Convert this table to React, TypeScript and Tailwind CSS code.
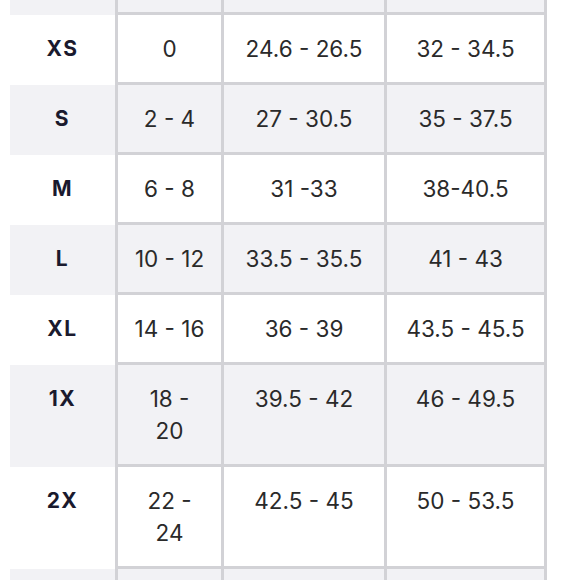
const rows: { size: string; cells: string[][]; gray: boolean }[] = [
  { size: 'XS', cells: [['0'], ['24.6 - 26.5'], ['32 - 34.5']], gray: false },
  { size: 'S', cells: [['2 - 4'], ['27 - 30.5'], ['35 - 37.5']], gray: true },
  { size: 'M', cells: [['6 - 8'], ['31 -33'], ['38-40.5']], gray: false },
  { size: 'L', cells: [['10 - 12'], ['33.5 - 35.5'], ['41 - 43']], gray: true },
  { size: 'XL', cells: [['14 - 16'], ['36 - 39'], ['43.5 - 45.5']], gray: false },
  { size: '1X', cells: [['18 -', '20'], ['39.5 - 42'], ['46 - 49.5']], gray: true },
  { size: '2X', cells: [['22 -', '24'], ['42.5 - 45'], ['50 - 53.5']], gray: false },
];

// widths include the cell borders (border-box)
const colWidths = ['w-[109px]', 'w-[163px]', 'w-[160px]'];

function Row({ size, cells, gray }: { size: string; cells: string[][]; gray: boolean }) {
  const bg = gray ? 'bg-[#f2f2f5]' : 'bg-white';
  return (
    <div className="flex">
      <div
        className={`w-[105px] ${bg} pt-[18px] text-center text-[21px] font-bold leading-[32px] tracking-[1.5px] text-[#1a1a2e]`}
      >
        {size}
      </div>
      {cells.map((lines, i) => (
        <div
          key={i}
          className={`${colWidths[i]} ${bg} ${i === 0 ? 'border-l-[3px]' : ''} border-r-[3px] border-b-[3px] border-[#d2d2d6] pt-[18px] pb-[17px] text-center text-[22.5px] leading-[32px] text-[#2a2a2a]`}
        >
          {lines.map((l, j) => (
            <div key={j}>{l}</div>
          ))}
        </div>
      ))}
    </div>
  );
}

export default function App() {
  return (
    <div
      className="h-[580px] w-[580px] overflow-hidden bg-white pl-[10px]"
      style={{ fontFamily: 'Inter, "Noto Sans", sans-serif' }}
    >
      {/* header row, cropped at the top */}
      <div className="flex">
        <div className="h-[15px] w-[105px] bg-[#f2f2f5]" />
        {colWidths.map((w, i) => (
          <div
            key={i}
            className={`${w} h-[15px] bg-[#f2f2f5] ${i === 0 ? 'border-l-[3px]' : ''} border-r-[3px] border-b-[3px] border-[#d2d2d6]`}
          />
        ))}
      </div>

      {rows.map((r) => (
        <Row key={r.size} {...r} />
      ))}

      {/* next row, cut off at the bottom */}
      <div className="flex">
        <div className="h-[40px] w-[105px] bg-[#f2f2f5]" />
        {colWidths.map((w, i) => (
          <div
            key={i}
            className={`${w} h-[40px] bg-[#f2f2f5] ${i === 0 ? 'border-l-[3px]' : ''} border-r-[3px] border-[#d2d2d6]`}
          />
        ))}
      </div>
    </div>
  );
}
